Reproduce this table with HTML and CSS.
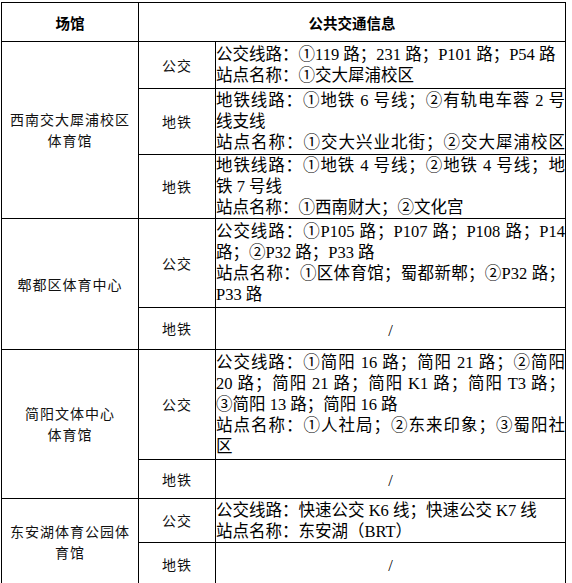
FILE: index.html
```html
<!DOCTYPE html>
<html lang="zh-CN">
<head>
<meta charset="utf-8">
<title>场馆公共交通信息</title>
<link rel="stylesheet" href="styles.css">
</head>
<body>
<div class="page">
<table class="venues">
<colgroup><col class="c-venue"><col class="c-type"><col class="c-info"></colgroup>
<thead>
<tr class="h39"><th>场馆</th><th colspan="2">公共交通信息</th></tr>
</thead>
<tbody>
<tr class="h47">
<td class="venue" rowspan="3">西南交大犀浦校区<br>体育馆</td>
<td class="type">公交</td>
<td class="info"><div class="ln">公交线路：①119 路；231 路；P101 路；P54 路</div><div class="ln">站点名称：①交大犀浦校区</div></td>
</tr>
<tr class="h66">
<td class="type">地铁</td>
<td class="info"><div class="ln full">地铁线路：①地铁 6 号线；②有轨电车蓉 2 号</div><div class="ln">线支线</div><div class="ln full">站点名称：①交大兴业北街；②交大犀浦校区</div></td>
</tr>
<tr class="h63">
<td class="type">地铁</td>
<td class="info"><div class="ln full">地铁线路：①地铁 4 号线；②地铁 4 号线；地</div><div class="ln">铁 7 号线</div><div class="ln">站点名称：①西南财大；②文化宫</div></td>
</tr>
<tr class="h89">
<td class="venue" rowspan="2">郫都区体育中心</td>
<td class="type">公交</td>
<td class="info"><div class="ln full">公交线路：①P105 路；P107 路；P108 路；P14</div><div class="ln">路；②P32 路；P33 路</div><div class="ln full">站点名称：①区体育馆；蜀都新郫；②P32 路；</div><div class="ln">P33 路</div></td>
</tr>
<tr class="h42">
<td class="type">地铁</td>
<td class="info none">/</td>
</tr>
<tr class="h110">
<td class="venue" rowspan="2">简阳文体中心<br>体育馆</td>
<td class="type">公交</td>
<td class="info"><div class="ln full">公交线路：①简阳 16 路；简阳 21 路；②简阳</div><div class="ln full">20 路；简阳 21 路；简阳 K1 路；简阳 T3 路；</div><div class="ln">③简阳 13 路；简阳 16 路</div><div class="ln full">站点名称：①人社局；②东来印象；③蜀阳社</div><div class="ln">区</div></td>
</tr>
<tr class="h39">
<td class="type">地铁</td>
<td class="info none">/</td>
</tr>
<tr class="h44">
<td class="venue" rowspan="2">东安湖体育公园体<br>育馆</td>
<td class="type">公交</td>
<td class="info"><div class="ln">公交线路：快速公交 K6 线；快速公交 K7 线</div><div class="ln">站点名称：东安湖（BRT）</div></td>
</tr>
<tr class="h43">
<td class="type">地铁</td>
<td class="info none">/</td>
</tr>
</tbody>
</table>
</div>
</body>
</html>
```

FILE: styles.css
```css
html {
  overflow: hidden;
}

body {
  margin: 0;
  background: #fff;
  color: #000;
  font-family: "Liberation Serif", "Noto Sans CJK SC", serif;
}

.page {
  padding: 2px 0 0 1px;
}

.venues {
  border-collapse: collapse;
  table-layout: fixed;
  width: 565px;
}

.c-venue { width: 137px; }
.c-type { width: 77px; }
.c-info { width: 350px; }

.venues th,
.venues td {
  border: 1px solid #000;
  padding: 0;
}

.venues th {
  font-family: "Noto Sans CJK SC", sans-serif;
  font-weight: 700;
  font-size: 14.5px;
  text-align: center;
  vertical-align: middle;
}

.h39 { height: 39px; }
.h42 { height: 42px; }
.h43 { height: 43px; }
.h44 { height: 44px; }
.h47 { height: 47px; }
.h63 { height: 63px; }
.h66 { height: 66px; }
.h89 { height: 89px; }
.h110 { height: 110px; }

.venue,
.type {
  font-family: "Noto Sans CJK SC", sans-serif;
  font-size: 14px;
  letter-spacing: 1px;
  line-height: 21px;
  text-align: center;
  vertical-align: middle;
  color: #111;
}

.info {
  font-size: 16.5px;
  line-height: 21px;
  padding: 0 3px 0 3px;
  vertical-align: middle;
  text-align: left;
}

.ln {
  white-space: nowrap;
}

.ln.full {
  text-align: justify;
  text-align-last: justify;
  white-space: normal;
}

.info.none {
  text-align: center;
  padding-top: 3px;
}
```
